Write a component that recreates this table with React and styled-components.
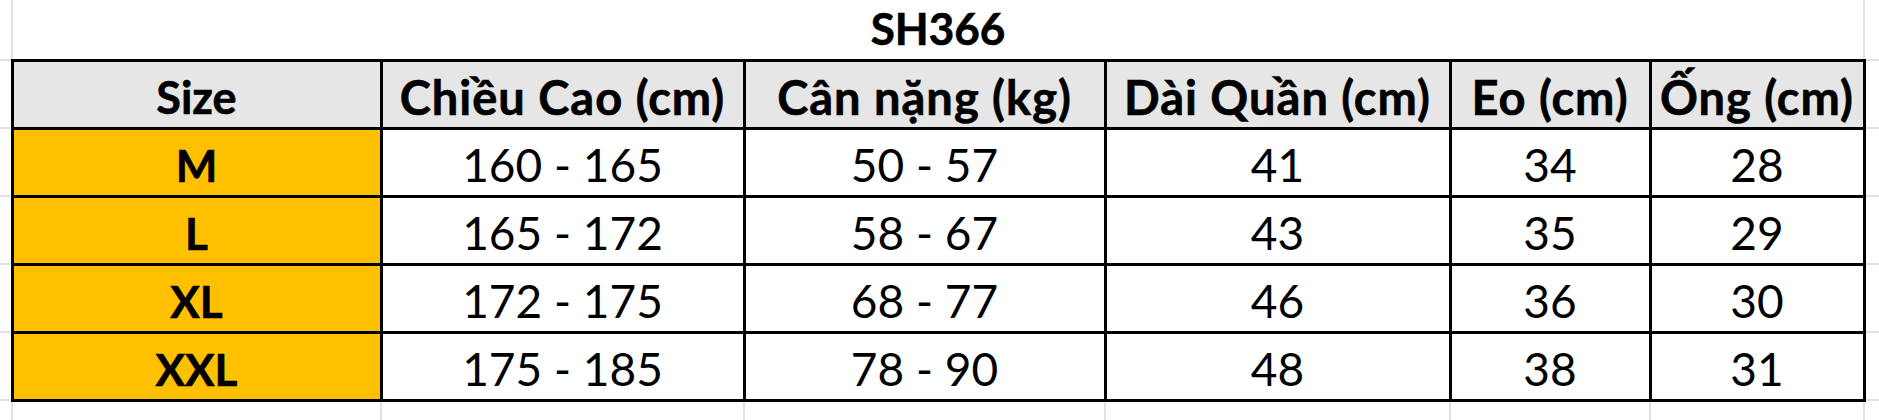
import React from "react";
import styled, { createGlobalStyle } from "styled-components";

const GlobalStyle = createGlobalStyle`
  html, body {
    margin: 0;
    padding: 0;
    background: #ffffff;
  }
  body {
    font-family: Lato, "Open Sans", "Liberation Sans", sans-serif;
    color: #000;
  }
`;

const columns = [12, 369, 363, 361, 345, 200, 214, 15];

const headers = [
  "Size",
  "Chiều Cao (cm)",
  "Cân nặng (kg)",
  "Dài Quần (cm)",
  "Eo (cm)",
  "Ống (cm)",
];

const rows = [
  ["M", "160 - 165", "50 - 57", "41", "34", "28"],
  ["L", "165 - 172", "58 - 67", "43", "35", "29"],
  ["XL", "172 - 175", "68 - 77", "46", "36", "30"],
  ["XXL", "175 - 185", "78 - 90", "48", "38", "31"],
];

function App() {
  return (
    <>
      <GlobalStyle />
      <Sheet>
        <colgroup>
          {columns.map((w, i) => (
            <col key={i} style={{ width: w }} />
          ))}
        </colgroup>
        <tbody>
          <Row $h={60}>
            <Gutter $side="left" />
            <TitleCell colSpan={6}>SH366</TitleCell>
            <Gutter $side="right" />
          </Row>
          <Row $h={68}>
            <Gutter $side="left" />
            {headers.map((h, i) => (
              <HeadCell key={h} $tight={i === 0}>
                {h}
              </HeadCell>
            ))}
            <Gutter $side="right" />
          </Row>
          {rows.map(([size, ...values]) => (
            <Row $h={68} key={size}>
              <Gutter $side="left" />
              <SizeCell>{size}</SizeCell>
              {values.map((v, i) => (
                <ValueCell key={i}>{v}</ValueCell>
              ))}
              <Gutter $side="right" />
            </Row>
          ))}
          <Row $h={20}>
            <Gutter $side="left" $open />
            {headers.map((h) => (
              <FootCell key={h} />
            ))}
            <Gutter $side="right" $open />
          </Row>
        </tbody>
      </Sheet>
    </>
  );
}

const Sheet = styled.table`
  width: 1879px;
  border-collapse: collapse;
  table-layout: fixed;
  border-spacing: 0;
`;

const Row = styled.tr`
  height: ${(p) => p.$h}px;
`;

const Gutter = styled.td`
  padding: 0;
  border-bottom: ${(p) => (p.$open ? "none" : "2px solid #e2e2e2")};
  border-${(p) => (p.$side === "left" ? "right" : "left")}: 2px solid #e2e2e2;
`;

const TitleCell = styled.td`
  padding: 0 0 2px;
  text-align: center;
  vertical-align: middle;
  font-weight: 700;
  font-size: 44px;
  line-height: 1;
  -webkit-text-stroke: 0.6px #000;
  border-left: 2px solid #e2e2e2;
  border-right: 2px solid #e2e2e2;
`;

const Cell = styled.td`
  padding: 6px 0 0;
  text-align: center;
  vertical-align: middle;
  line-height: 1;
  white-space: nowrap;
  border: 3px solid #000;
  font-size: 46px;
`;

const HeadCell = styled(Cell).attrs({ as: "th" })`
  background: #e7e6e6;
  font-weight: 700;
  font-size: ${(p) => (p.$tight ? 45 : 47)}px;
  letter-spacing: ${(p) => (p.$tight ? 0 : 1)}px;
  -webkit-text-stroke: 0.6px #000;
`;

const SizeCell = styled(Cell)`
  background: #ffc000;
  font-weight: 700;
  font-size: 44px;
  -webkit-text-stroke: 0.6px #000;
`;

const ValueCell = styled(Cell)`
  font-weight: 400;
`;

const FootCell = styled.td`
  padding: 0;
  border-left: 2px solid #e2e2e2;
  border-right: 2px solid #e2e2e2;
`;

export default App;
